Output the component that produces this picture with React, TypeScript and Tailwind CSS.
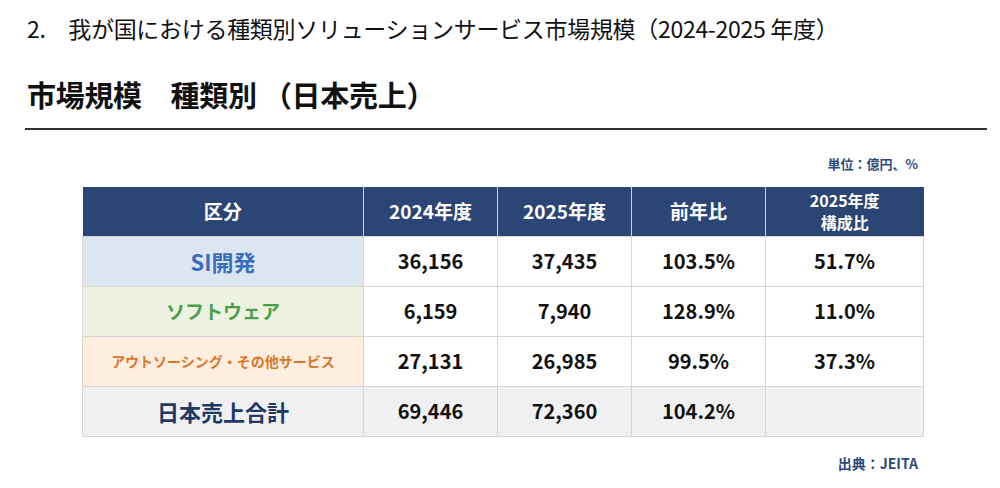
const FONT = "font-['Noto_Sans_CJK_JP','Noto_Sans',sans-serif]";

type Row = {
  label: string;
  labelClass: string;
  cellBg: string;
  values: string[];
  total?: boolean;
};

const ROWS: Row[] = [
  {
    label: "SI開発",
    labelClass: "text-[22px] text-[#3a6dbd]",
    cellBg: "bg-[#dce6f0]",
    values: ["36,156", "37,435", "103.5%", "51.7%"],
  },
  {
    label: "ソフトウェア",
    labelClass: "text-[19px] text-[#4aa04a]",
    cellBg: "bg-[#eef2e1]",
    values: ["6,159", "7,940", "128.9%", "11.0%"],
  },
  {
    label: "アウトソーシング・その他サービス",
    labelClass: "text-[14px] text-[#d9772c]",
    cellBg: "bg-[#fdeee0]",
    values: ["27,131", "26,985", "99.5%", "37.3%"],
  },
  {
    label: "日本売上合計",
    labelClass: "text-[22px] text-[#1f3864]",
    cellBg: "bg-[#f0f0f2]",
    values: ["69,446", "72,360", "104.2%", ""],
    total: true,
  },
];

export default function App() {
  return (
    <div className={`w-[1000px] h-[488px] bg-white text-[#111] ${FONT} overflow-hidden`}>
      <div className="pl-[27px] pt-[12px]">
        <h1 className="text-[23px] leading-[32px] font-normal tracking-[-0.3px]">
          2.　我が国における種類別ソリューションサービス市場規模（2024-2025 年度）
        </h1>
        <h2 className="mt-[32px] text-[29px] leading-[36px] font-bold tracking-[-0.3px]">
          市場規模　種類別 （日本売上）
        </h2>
      </div>

      <div className="mx-[25px] mt-[16px] h-[2px] w-[962px] bg-[#333]" />

      <div className="w-[918px] mt-[26px] text-right text-[13px] leading-[16px] font-bold text-[#2f4a7a]">
        単位：億円、%
      </div>

      <div className="pl-[82px] mt-[15px]">
        <table className="w-[841px] border-collapse table-fixed">
          <colgroup>
            <col className="w-[281px]" />
            <col className="w-[134px]" />
            <col className="w-[134px]" />
            <col className="w-[134px]" />
            <col className="w-[158px]" />
          </colgroup>
          <thead>
            <tr className="h-[49px] bg-[#2b4574] text-white">
              <th className="text-[19px] font-bold border-r border-[#c9d1de]">区分</th>
              <th className="text-[19px] font-bold border-r border-[#c9d1de]">2024年度</th>
              <th className="text-[19px] font-bold border-r border-[#c9d1de]">2025年度</th>
              <th className="text-[19px] font-bold border-r border-[#c9d1de]">前年比</th>
              <th className="font-bold p-0">
                <span className="block text-[16px] leading-[24px]">2025年度</span>
                <span className="block text-[16px] leading-[24px] -mt-[2px]">構成比</span>
              </th>
            </tr>
          </thead>
          <tbody>
            {ROWS.map((row) => (
              <tr
                key={row.label}
                className={`h-[50px] ${row.total ? "bg-[#f0f0f2] border-t-[1.5px] border-t-[#4a5878]" : "bg-white"}`}
              >
                <td
                  className={`text-center font-bold border border-[#d6d6d6] ${row.cellBg} ${row.labelClass}`}
                >
                  {row.label}
                </td>
                {row.values.map((v, i) => (
                  <td
                    key={i}
                    className="text-center text-[20px] font-bold text-[#111] border border-[#d6d6d6]"
                  >
                    {v}
                  </td>
                ))}
              </tr>
            ))}
          </tbody>
        </table>
      </div>

      <div className="w-[918px] mt-[18px] text-right text-[14px] leading-[16px] font-bold text-[#2f4a7a]">
        出典：JEITA
      </div>
    </div>
  );
}
